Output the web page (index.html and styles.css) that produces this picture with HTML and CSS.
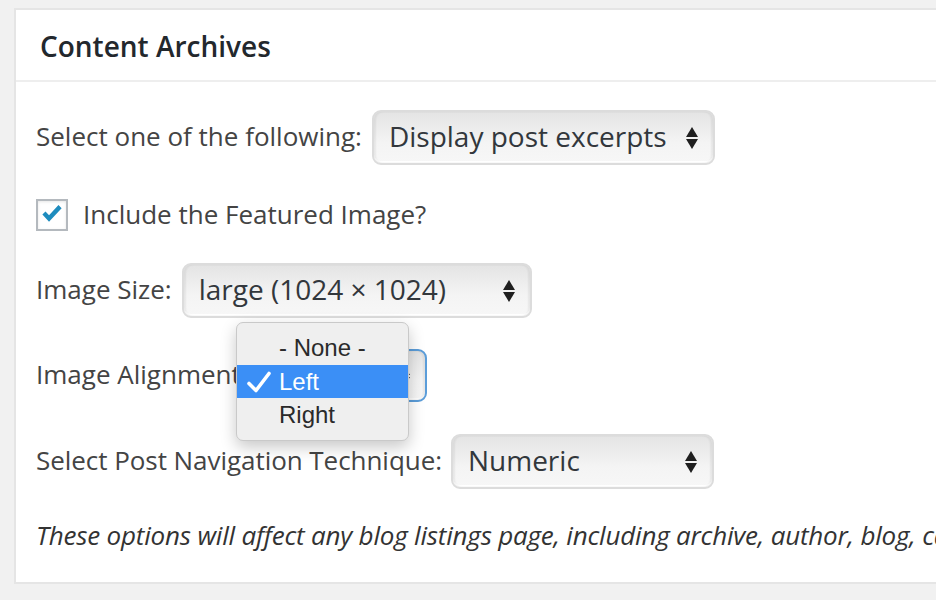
FILE: index.html
```html
<!DOCTYPE html>
<html>
<head>
<meta charset="utf-8">
<link rel="stylesheet" href="styles.css">
</head>
<body>
<div class="card">
  <div class="card-head"><h2>Content Archives</h2></div>
  <div class="card-body">
    <div class="row r1">
      <label>Select one of the following:</label>
      <div class="select w1"><span>Display post excerpts</span><i class="arrows"></i></div>
    </div>
    <div class="row r2">
      <span class="checkbox"><svg viewBox="0 0 32 32" width="28" height="28"><path d="M5 15.5 L8.6 12 L12.6 16.4 L23.4 4.6 L27 8.2 L12.6 23.6 Z" fill="#1e8cbe"/></svg></span>
      <label class="cb-label">Include the Featured Image?</label>
    </div>
    <div class="row r3">
      <label>Image Size:</label>
      <div class="select w2"><span>large (1024 × 1024)</span><i class="arrows"></i></div>
    </div>
    <div class="row r4">
      <label>Image Alignment:</label>
      <div class="select w3 focus"><span>Left</span><i class="arrows"></i></div>
      <div class="menu">
        <div class="opt">- None -</div>
        <div class="opt sel"><svg class="tick" viewBox="0 0 26 24" width="26" height="24"><path d="M3 13.5 L10 20.5 L23 3.5" fill="none" stroke="#fff" stroke-width="3.6" stroke-linecap="round" stroke-linejoin="round"/></svg>Left</div>
        <div class="opt">Right</div>
      </div>
    </div>
    <div class="row r5">
      <label class="tight">Select Post Navigation Technique:</label>
      <div class="select w4"><span>Numeric</span><i class="arrows"></i></div>
    </div>
    <p class="note">These options will affect any blog listings page, including archive, author, blog, category, search, and tag pages.</p>
  </div>
</div>
</body>
</html>
```

FILE: styles.css
```css
* { box-sizing: border-box; }
html, body { margin: 0; padding: 0; }
body {
  width: 936px;
  height: 600px;
  overflow: hidden;
  background: #f1f1f1;
  font-family: "Open Sans", "Noto Sans", sans-serif;
  color: #444;
}
.card {
  margin: 8px 0 0 14px;
  width: 922px;
  height: 576px;
  overflow: hidden;
  background: #fff;
  border: 2px solid #e5e5e5;
  border-right: none;
}
.card-head {
  height: 72px;
  border-bottom: 2px solid #eee;
  padding-left: 24px;
  display: flex;
  align-items: center;
}
.card-head h2 {
  margin: 0;
  font-size: 28px;
  font-weight: 600;
  color: #23282d;
  line-height: 1;
  position: relative;
  top: 1px;
}
.card-body {
  padding: 0 0 0 20px;
  position: relative;
}
.row {
  display: flex;
  align-items: center;
  height: 55px;
  position: relative;
}
.r1 { margin-top: 28px; }
.r2 { margin-top: 22px; }
.r3 { margin-top: 21px; }
.r4 { margin-top: 31px; height: 53px; }
.r5 { margin-top: 32px; }
label {
  font-size: 26px;
  color: #444;
  margin-right: 10px;
  white-space: nowrap;
  position: relative;
  top: -2px;
}
label.tight { margin-right: 9px; letter-spacing: -0.05px; }
.select {
  position: relative;
  height: 55px;
  border: 2px solid #dcdcdc;
  border-radius: 9px;
  background: linear-gradient(#e4e4e4, #f4f4f4 60%, #f7f7f7);
  box-shadow: inset 2px 0 2px rgba(0,0,0,0.06), inset -2px 0 2px rgba(0,0,0,0.06), inset 0 -2px 0 #fff;
  display: flex;
  align-items: center;
  padding-left: 15px;
  font-size: 28px;
  color: #32373c;
}
.select span { position: relative; top: -2px; }
.w1 { width: 343px; }
.w2 { width: 350px; }
.w3 { width: 169px; height: 53px; }
.w4 { width: 263px; }
.focus { border-color: #5b9dd9; }
.arrows {
  position: absolute;
  right: 15px;
  top: 50%;
  width: 12px;
  height: 24px;
  margin-top: -12px;
}
.arrows::before, .arrows::after {
  content: "";
  position: absolute;
  left: 0;
  border-left: 6px solid transparent;
  border-right: 6px solid transparent;
}
.arrows::before { top: 1px; border-bottom: 10px solid #1f1f1f; }
.arrows::after { bottom: 1px; border-top: 10px solid #1f1f1f; }
.checkbox {
  width: 32px;
  height: 32px;
  border: 2px solid #b4b9be;
  background: #fff;
  box-shadow: inset 0 1px 3px rgba(0,0,0,0.1);
  display: flex;
  align-items: center;
  justify-content: center;
  margin-right: 15px;
}
.cb-label { top: -1px; }
.menu {
  position: absolute;
  left: 200px;
  top: -27px;
  width: 173px;
  height: 119px;
  background: #efefef;
  border: 1px solid #c9c9c9;
  border-radius: 7px;
  box-shadow: 0 6px 16px rgba(0,0,0,0.22);
  padding-top: 8px;
  font-family: "Liberation Sans", Arial, sans-serif;
  font-size: 24px;
  color: #2a2a2a;
  z-index: 2;
}
.opt {
  height: 33.5px;
  line-height: 33.5px;
  padding-left: 42px;
  position: relative;
}
.sel { background: #3b8ff6; color: #fff; }
.tick {
  position: absolute;
  left: 9px;
  top: 5px;
}
.note {
  margin: 28px 0 0 0;
  font-style: italic;
  font-size: 26px;
  white-space: nowrap;
  color: #333;
  letter-spacing: -0.2px;
}
```
